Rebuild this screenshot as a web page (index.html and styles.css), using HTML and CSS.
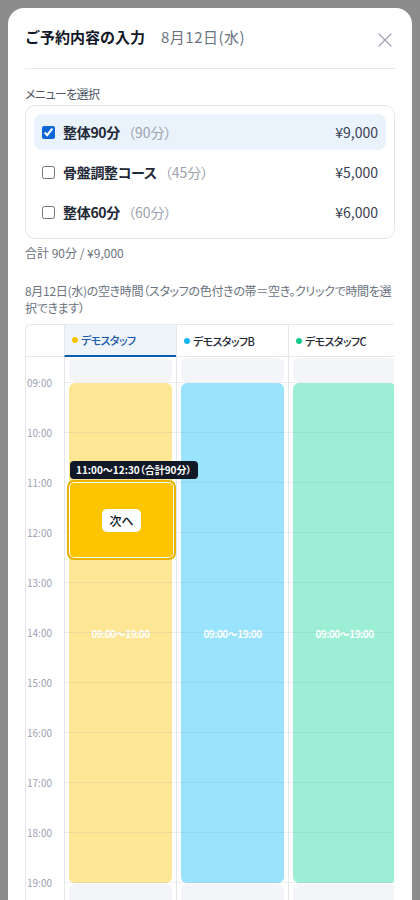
FILE: index.html
```html
<!DOCTYPE html>
<html lang="ja">
<head>
<meta charset="utf-8">
<title>ご予約内容の入力</title>
<link rel="stylesheet" href="styles.css">
</head>
<body>
<div class="modal">
  <header class="modal-head">
    <div class="head-title">
      <h1 class="title">ご予約内容の入力</h1>
      <span class="date">8月12日(水)</span>
    </div>
    <button class="close" aria-label="閉じる">
      <svg width="14" height="14" viewBox="0 0 14 14"><path d="M1 1L13 13M13 1L1 13" stroke="#9ca3af" stroke-width="1.3" fill="none" stroke-linecap="round"/></svg>
    </button>
  </header>

  <div class="section-label">メニューを選択</div>
  <div class="menu-box">
    <label class="menu-row selected">
      <input type="checkbox" checked>
      <span class="menu-name">整体90分</span>
      <span class="menu-dur">（90分）</span>
      <span class="menu-price">¥9,000</span>
    </label>
    <label class="menu-row">
      <input type="checkbox">
      <span class="menu-name">骨盤調整コース</span>
      <span class="menu-dur">（45分）</span>
      <span class="menu-price">¥5,000</span>
    </label>
    <label class="menu-row">
      <input type="checkbox">
      <span class="menu-name">整体60分</span>
      <span class="menu-dur">（60分）</span>
      <span class="menu-price">¥6,000</span>
    </label>
  </div>
  <div class="sum">合計 90分 / ¥9,000</div>

  <p class="desc">8月12日(水)の空き時間（スタッフの色付きの帯＝空き。クリックで時間を選択できます）</p>

  <div class="schedule">
    <div class="sch-grid">
      <div class="hcell time-h"></div>
      <div class="hcell active"><span class="dot yellow"></span>デモスタッフ</div>
      <div class="hcell"><span class="dot blue"></span>デモスタッフB</div>
      <div class="hcell"><span class="dot green"></span>デモスタッフC</div>

      <div class="times">
        <div class="tl">09:00</div>
        <div class="tl">10:00</div>
        <div class="tl">11:00</div>
        <div class="tl">12:00</div>
        <div class="tl">13:00</div>
        <div class="tl">14:00</div>
        <div class="tl">15:00</div>
        <div class="tl">16:00</div>
        <div class="tl">17:00</div>
        <div class="tl">18:00</div>
        <div class="tl">19:00</div>
      </div>
      <div class="col">
        <div class="slot off top"></div>
        <div class="slot band yellow-band">09:00〜19:00</div>
        <div class="slot off bottom"></div>
        <div class="tip">11:00〜12:30（合計90分）</div>
        <div class="pick"><button class="next">次へ</button></div>
      </div>
      <div class="col">
        <div class="slot off top"></div>
        <div class="slot band blue-band">09:00〜19:00</div>
        <div class="slot off bottom"></div>
      </div>
      <div class="col">
        <div class="slot off top"></div>
        <div class="slot band green-band">09:00〜19:00</div>
        <div class="slot off bottom"></div>
      </div>
      <div class="hlines"></div>
    </div>
  </div>
</div>
</body>
</html>
```

FILE: styles.css
```css
* { box-sizing: border-box; }
html, body { margin: 0; padding: 0; }
body {
  background: #8c8c8c;
  font-family: "Noto Sans CJK JP", "Noto Sans", sans-serif;
  font-feature-settings: "palt";
  color: #1f2937;
  height: 900px;
  overflow: hidden;
}
button, input { font-feature-settings: "palt"; }
.modal {
  margin: 8px 8px 0 8px;
  width: 404px;
  background: #fff;
  border-radius: 16px;
  padding: 0 17px 40px 17px;
  min-height: 1000px;
}
.modal-head {
  display: flex;
  align-items: center;
  justify-content: space-between;
  padding: 18px 0 20px 0;
  border-bottom: 1px solid #e5e7eb;
}
.head-title { display: flex; align-items: baseline; gap: 16px; }
.title {
  margin: 0;
  font-size: 15px;
  line-height: 22px;
  font-weight: 700;
  color: #111827;
  font-feature-settings: normal;
}
.date { font-size: 15px; color: #6b7280; line-height: 22px; letter-spacing: 0.5px; }
.close {
  border: 0; background: none; padding: 0; margin: 6px 2px 0 0;
  width: 16px; height: 16px; display: flex; align-items: center; justify-content: center;
}
.section-label {
  margin-top: 16px;
  font-size: 12px;
  line-height: 17px;
  color: #4b5563;
  letter-spacing: -0.6px;
}
.menu-box {
  margin-top: 3px;
  border: 1px solid #e5e7eb;
  border-radius: 10px;
  padding: 8px;
  display: flex;
  flex-direction: column;
  gap: 4px;
}
.menu-row {
  display: flex;
  align-items: center;
  height: 36px;
  padding: 0 8px;
  border-radius: 8px;
  font-size: 14px;
}
.menu-row.selected { background: #eaf2fc; }
.menu-row input {
  margin: 0 8px 0 0;
  width: 13px; height: 13px;
  accent-color: #0b66d8;
}
.menu-name { font-weight: 700; color: #1f2937; letter-spacing: -0.3px; }
.menu-dur { color: #9ca3af; margin-left: 8px; }
.menu-price { margin-left: auto; color: #374151; }
.sum {
  margin-top: 5px;
  font-size: 12px;
  line-height: 17px;
  color: #6b7280;
}
.desc {
  margin: 21px 0 8px 0;
  font-size: 12px;
  line-height: 17px;
  color: #6b7280;
  letter-spacing: -0.3px;
}
.schedule {
  width: 369px;
  border: 1px solid #e5e7eb;
  border-right: 0;
  border-radius: 6px 0 0 0;
  overflow: hidden;
}
.sch-grid {
  position: relative;
  display: grid;
  grid-template-columns: 38px repeat(3, 112px);
  width: 374px;
}
.hcell {
  height: 32px;
  border-bottom: 1px solid #e5e7eb;
  border-left: 1px solid #e5e7eb;
  display: flex;
  align-items: center;
  padding-left: 7px;
  font-size: 11px;
  font-weight: 500;
  color: #1f2937;
  white-space: nowrap;
  letter-spacing: -0.6px;
}
.hcell.time-h { border-left: 0; }
.hcell.active {
  background: #eff4fa;
  color: #1a5aa8;
  border-bottom: 2px solid #0b5cad;
}
.dot {
  width: 6px; height: 6px; border-radius: 50%;
  margin-right: 3px; flex: none;
}
.dot.yellow { background: #f8c500; }
.dot.blue { background: #12b4f5; }
.dot.green { background: #12c98b; }

.times {
  padding-top: 20px;
  height: 552px;
}
.tl {
  height: 50px;
  font-size: 10px;
  line-height: 12px;
  color: #9ca0b4;
  padding-left: 1px;
}
.col {
  position: relative;
  border-left: 1px solid #e5e7eb;
  padding: 1px 4px 0 4px;
  display: flex;
  flex-direction: column;
  gap: 1px;
}
.slot { border-radius: 6px; flex: none; }
.slot.off { background: #f4f5f9; }
.slot.top { height: 24px; }
.slot.bottom { height: 40px; }
.slot.band {
  height: 500px;
  display: flex;
  align-items: center;
  justify-content: center;
  color: #fff;
  font-size: 10px;
  font-weight: 700;
  letter-spacing: -0.5px;
}
.yellow-band { background: #fde796; }
.blue-band { background: #9ae3fd; }
.green-band { background: #9cefd5; }

.hlines {
  position: absolute;
  left: 38px; right: 0;
  top: 57px;
  height: 520px;
  pointer-events: none;
  background: repeating-linear-gradient(to bottom, rgba(120,130,160,0.13) 0 1px, transparent 1px 50px);
}
.tip {
  position: absolute;
  z-index: 3;
  left: 5px;
  top: 104px;
  height: 18px;
  padding: 0 6px;
  background: #111827;
  color: #fff;
  border-radius: 4px;
  font-size: 10px;
  font-weight: 700;
  line-height: 18px;
  white-space: nowrap;
}
.pick {
  position: absolute;
  z-index: 2;
  left: 2px;
  top: 123px;
  width: 109px;
  height: 80px;
  background: #fcc500;
  border: 2px solid #e9b100;
  box-shadow: inset 0 0 0 1px #fff;
  border-radius: 7px;
  display: flex;
  align-items: center;
  justify-content: center;
}
.next {
  border: 0;
  background: #fff;
  border-radius: 5px;
  width: 39px;
  height: 23px;
  padding: 0;
  font-family: inherit;
  font-size: 12px;
  font-weight: 500;
  color: #111827;
}
```
